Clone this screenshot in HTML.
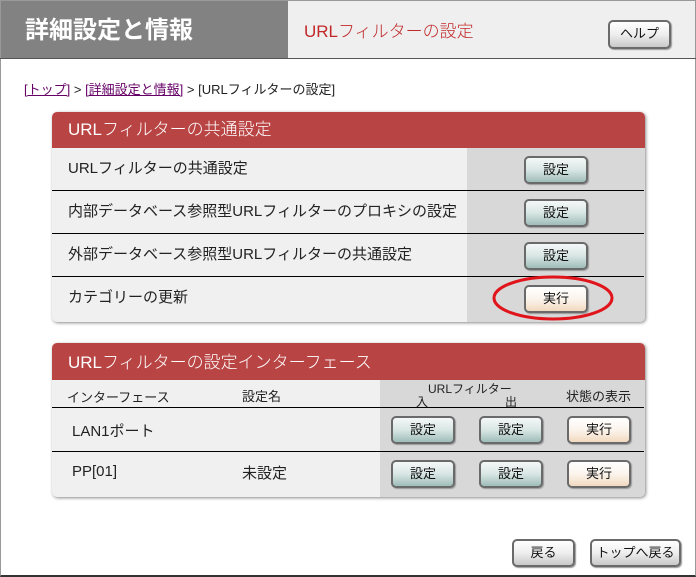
<!DOCTYPE html>
<html><head><meta charset="utf-8"><style>
*{margin:0;padding:0;box-sizing:border-box}
body{width:696px;height:577px;background:#fff;position:relative;overflow:hidden;font-family:"Liberation Sans","Noto Sans CJK JP",sans-serif;color:#222}
.a{position:absolute}
.btn{position:absolute;width:64px;height:28px;border:2px solid #6a6a6a;border-radius:5px;font-size:13px;text-align:center;line-height:24px;color:#111;box-shadow:1px 1px 1px #999}
.s{background:linear-gradient(#f4f8f8,#d8e6e4 50%,#9fbdb9)}
.j{background:linear-gradient(#fff,#fbf4ec 50%,#f2d9c0)}
.g{background:linear-gradient(#fff,#eee 50%,#c8c8c8)}
.hd{background:#b94444;color:#fff;font-size:17px;line-height:36px;padding-left:16px;font-weight:300}
.row{position:absolute;left:0;width:592px;font-size:15px;border-bottom:1px solid #000}
</style></head><body>
<div class="a" style="left:0;top:0;width:696px;height:577px;border:1px solid #999;border-bottom:2px solid #333"></div>
<div class="a" style="left:1px;top:1px;width:287px;height:57px;background:#828282;color:#fff;font-size:24px;font-weight:bold;line-height:60px;padding-left:24px">詳細設定と情報</div>
<div class="a" style="left:288px;top:1px;width:407px;height:57px;background:#efefef;color:#c0282a;font-size:17px;line-height:62px;padding-left:16px;font-weight:300">URLフィルターの設定</div>
<div class="a" style="left:0;top:58px;width:696px;height:1px;background:#555"></div>
<div class="btn g" style="left:608px;top:20px;width:63px;height:29px">ヘルプ</div>
<div class="a" style="left:24px;top:79px;font-size:13px"><span style="color:#606;text-decoration:underline">[トップ]</span> &gt; <span style="color:#606;text-decoration:underline">[詳細設定と情報]</span> &gt; [URLフィルターの設定]</div>

<div class="a" style="left:52px;top:112px;width:593px;height:210px;border-radius:5px;overflow:hidden;background:#f0f0f0;box-shadow:1px 1px 3px #888">
<div class="hd" style="height:36px;">URLフィルターの共通設定</div>
<div class="a" style="left:415px;top:36px;width:178px;height:174px;background:#d8d8d8"></div>
<div class="row" style="top:36px;height:43px;line-height:42px;padding-left:16px">URLフィルターの共通設定</div>
<div class="row" style="top:79px;height:43px;line-height:42px;padding-left:16px">内部データベース参照型URLフィルターのプロキシの設定</div>
<div class="row" style="top:122px;height:43px;line-height:42px;padding-left:16px">外部データベース参照型URLフィルターの共通設定</div>
<div class="row" style="top:165px;height:44px;line-height:42px;padding-left:16px;border:none">カテゴリーの更新</div>
<div class="btn s" style="left:472px;top:44px">設定</div>
<div class="btn s" style="left:472px;top:87px">設定</div>
<div class="btn s" style="left:472px;top:130px">設定</div>
<div class="btn j" style="left:472px;top:173px">実行</div>
</div>
<svg class="a" style="left:0;top:0" width="696" height="577"><ellipse cx="553" cy="298" rx="59" ry="21" fill="none" stroke="#e0141a" stroke-width="3"/></svg>

<div class="a" style="left:52px;top:343px;width:593px;height:154px;border-radius:5px;overflow:hidden;background:#f0f0f0;box-shadow:1px 1px 3px #888">
<div class="hd" style="height:37px;line-height:40px">URLフィルターの設定インターフェース</div>
<div class="a" style="left:328px;top:37px;width:265px;height:117px;background:#d8d8d8"></div>
<div class="a" style="left:15px;top:44px;font-size:13px">インターフェース</div>
<div class="a" style="left:190px;top:43px;font-size:13px">設定名</div>
<div class="a" style="left:376px;top:37px;font-size:12px">URLフィルター</div>
<div class="a" style="left:364px;top:50px;font-size:12px">入</div>
<div class="a" style="left:453px;top:50px;font-size:12px">出</div>
<div class="a" style="left:514px;top:43px;font-size:13px">状態の表示</div>
<div class="a" style="left:0;top:64px;width:592px;height:1px;background:#000"></div>
<div class="a" style="left:20px;top:77px;font-size:15px">LAN1ポート</div>
<div class="a" style="left:0;top:108px;width:592px;height:1px;background:#000"></div>
<div class="a" style="left:20px;top:120px;font-size:15px">PP[01]</div>
<div class="a" style="left:190px;top:119px;font-size:15px">未設定</div>
<div class="btn s" style="left:339px;top:73px">設定</div>
<div class="btn s" style="left:427px;top:73px">設定</div>
<div class="btn j" style="left:515px;top:73px">実行</div>
<div class="btn s" style="left:339px;top:117px">設定</div>
<div class="btn s" style="left:427px;top:117px">設定</div>
<div class="btn j" style="left:515px;top:117px">実行</div>
</div>

<div class="btn g" style="left:512px;top:539px;width:63px">戻る</div>
<div class="btn g" style="left:590px;top:539px;width:91px">トップへ戻る</div>
</body></html>
